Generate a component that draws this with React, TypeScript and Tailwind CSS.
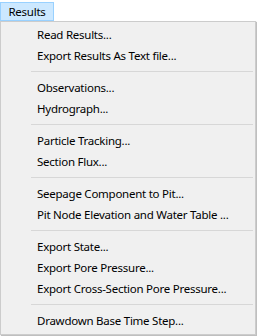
import React from 'react';

type Entry = string | null;

const groups: Entry[] = [
    'Read Results...',
    'Export Results As Text file...',
    null,
    'Observations...',
    'Hydrograph...',
    null,
    'Particle Tracking...',
    'Section Flux...',
    null,
    'Seepage Component to Pit...',
    'Pit Node Elevation and Water Table ...',
    null,
    'Export State...',
    'Export Pore Pressure...',
    'Export Cross-Section Pore Pressure...',
    null,
    'Drawdown Base Time Step...',
];

export default function App() {
    return (
        <div
            className="w-[257px] h-[336px] bg-white text-[11.5px] tracking-[-0.25px] text-black overflow-hidden"
            style={{ fontFamily: '"Noto Sans", "Liberation Sans", sans-serif' }}
        >
            <div className="h-[21px] pt-[2px]">
                <div className="w-[54px] h-[19px] bg-[#cce8ff] border border-[#99d1ff] flex items-center justify-center leading-none">
                    Results
                </div>
            </div>
            <div className="w-[256px] bg-[#f0f0f0] border border-[#cccccc] pt-[2px] pb-[3px] shadow-[1px_1px_1px_rgba(0,0,0,0.25)]">
                {groups.map((item, i) =>
                    item === null ? (
                        <div key={i} className="h-[11px] flex items-center pl-[30px] pr-[2px]">
                            <div className="h-px w-full bg-[#d7d7d7]" />
                        </div>
                    ) : (
                        <div key={i} className="h-[21px] flex items-center pl-[36px] pt-px whitespace-nowrap">
                            {item}
                        </div>
                    )
                )}
            </div>
        </div>
    );
}
